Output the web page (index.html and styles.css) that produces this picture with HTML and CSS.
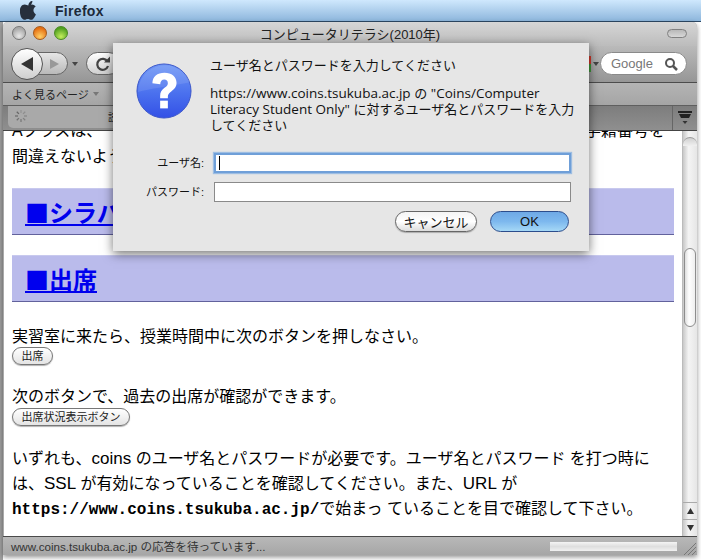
FILE: index.html
```html
<!DOCTYPE html>
<html lang="ja">
  <head>
    <meta charset="UTF-8" />
    <title>コンピュータリテラシ(2010年)</title>
    <link rel="stylesheet" href="styles.css">
  </head>
  <body>
    <div class="menubar">
      <svg class="apple" width="18" height="20" viewBox="0 0 18 20"><path d="M12.400 1c.1 1.300-.4 2.400-1.100 3.200-.8.900-1.900 1.400-2.900 1.300-.1-1.200.5-2.400 1.100-3.100C10.300 1.500 11.500 1 12.400 1zM15.900 14.400c-.5 1.100-.7 1.500-1.300 2.500-.9 1.300-2 2.900-3.500 2.900-1.300 0-1.600-.8-3.300-.8s-2.100.8-3.400.8c-1.500 0-2.500-1.400-3.400-2.700C-.4 13.200-.6 9 .8 6.900c1-1.500 2.500-2.300 4-2.300 1.500 0 2.400.8 3.600.8 1.200 0 1.900-.8 3.600-.8 1.300 0 2.700.7 3.700 2-3.300 1.800-2.700 6.400.2 7.800z" fill="#262f3c"/></svg>
      <span class="app-name">Firefox</span>
    </div>

    <div class="window">
      <div class="titlebar">
        <div class="lights">
          <span class="light light-off"></span>
          <span class="light light-min"></span>
          <span class="light light-max"></span>
        </div>
        <div class="title">コンピュータリテラシ(2010年)</div>
        <span class="pill"></span>
      </div>

      <div class="toolbar">
        <div class="nav">
          <button class="back"><svg width="16" height="16" viewBox="0 0 16 16"><path d="M14 1v14L2 8z" fill="#333"/></svg></button>
          <button class="forward"><svg width="12" height="12" viewBox="0 0 12 12"><path d="M2 1v10l9-5z" fill="#999"/></svg></button>
        </div>
        <span class="drop-arrow"></span>
        <button class="reload"><svg width="16" height="16" viewBox="0 0 16 16"><path d="M12.500 5.500A5.500 5.500 0 1 0 13 10" fill="none" stroke="#444" stroke-width="2.200"/><path d="M9 6.500h6v-6z" fill="#444"/></svg></button>
        <div class="spacer"></div>
        <span class="engine-icon"></span>
        <span class="engine-arrow"></span>
        <div class="search">
          <span>Google</span>
          <svg width="14" height="14" viewBox="0 0 14 14"><circle cx="6" cy="6" r="4" fill="none" stroke="#555" stroke-width="2"/><path d="M9 9l4 4" stroke="#555" stroke-width="2.500"/></svg>
        </div>
      </div>

      <div class="bookmarks">
        <span>よく見るページ</span>
        <span class="book-arrow"></span>
      </div>

      <div class="tabbar">
        <div class="tab">
          <svg class="spinner" width="14" height="14" viewBox="0 0 14 14"><g stroke="#666" stroke-width="1.300"><path d="M7 1v3" opacity=".3"/><path d="M11.200 2.800L9.100 4.900" opacity=".4"/><path d="M13 7h-3" opacity=".5"/><path d="M11.200 11.200L9.100 9.100" opacity=".6"/><path d="M7 13v-3" opacity=".7"/><path d="M2.800 11.200l2.100-2.100" opacity=".8"/><path d="M1 7h3" opacity=".9"/><path d="M2.800 2.800l2.100 2.100"/></g></svg>
          <span class="tab-title">読み込み中...</span>
        </div>
        <div class="tab-list">
          <svg width="18" height="16" viewBox="0 0 18 16"><path d="M2 1h14v2h-14zM3 4h12l-2 4h-8z" fill="#222"/><path d="M6.500 11h5l-2.500 3z" fill="#333"/></svg>
        </div>
      </div>

      <div class="viewport">
        <div class="page">
          <p class="clipped"><span>Aクラスは、</span><span>学籍番号を</span></p>
          <p class="line">間違えないようにして下さい。</p>
          <h2 class="heading"><a href="#">■シラバス</a></h2>
          <h2 class="heading"><a href="#">■出席</a></h2>
          <p class="line first">実習室に来たら、授業時間中に次のボタンを押しなさい。</p>
          <button class="form-btn btn-short">出席</button>
          <p class="line second">次のボタンで、過去の出席が確認ができます。</p>
          <button class="form-btn btn-long">出席状況表示ボタン</button>
          <p class="para">いずれも、<span class="lat">coins</span> のユーザ名とパスワードが必要です。ユーザ名とパスワード を打つ時には、<span class="lat">SSL</span> が有効になっていることを確認してください。また、<span class="lat">URL</span> が<br><b>https://www.coins.tsukuba.ac.jp/</b>で始まっ ていることを目で確認して下さい。</p>
        </div>
        <div class="scrollbar">
          <div class="track">
            <div class="thumb"></div>
          </div>
          <div class="arrow-btn"><svg width="9" height="8" viewBox="0 0 9 8"><path d="M4.500 1L8 7H1z" fill="#333"/></svg></div>
          <div class="arrow-btn"><svg width="9" height="8" viewBox="0 0 9 8"><path d="M4.500 7L8 1H1z" fill="#333"/></svg></div>
        </div>
      </div>

      <div class="statusbar">
        <span class="status-text">www.coins.tsukuba.ac.jp の応答を待っています...</span>
        <span class="progress"></span>
        <svg class="grip" width="12" height="12" viewBox="0 0 12 12"><path d="M0 12L12 0M4 12l8-8M8 12l4-4" stroke="#777" stroke-width="1"/></svg>
      </div>
    </div>

    <div class="dialog">
      <div class="dialog-top">
        <svg class="q-icon" width="56" height="56" viewBox="0 0 58 58">
          <defs>
            <linearGradient id="qg" x1="0" y1="0" x2="0" y2="1">
              <stop offset="0" stop-color="#6f97f5"/>
              <stop offset="0.55" stop-color="#4a70ee"/>
              <stop offset="1" stop-color="#3350e6"/>
            </linearGradient>
          </defs>
          <circle cx="29" cy="29" r="28" fill="url(#qg)" stroke="#3a55c8" stroke-width="1"/>
          <path d="M2 30C14 27 34 24 56 20A28 28 0 0 0 2 30z" fill="#fff" opacity=".1"/>
          <path d="M17 21c0-7 5-11 12.500-11C37 10 42 14 42 20.500c0 4.500-2.500 6.700-5.500 8.900-2.500 1.800-3.500 3-3.500 5.600v1.500h-8v-2.500c0-4 1.500-6 4.500-8.300 2.300-1.700 3.500-2.800 3.500-4.800 0-2.200-1.500-3.700-3.700-3.700-2.500 0-4 1.700-4.200 4.800z" fill="#fff"/>
          <rect x="25" y="39" width="8" height="8" fill="#fff"/>
        </svg>
        <div class="dialog-text">
          <p class="dialog-head">ユーザ名とパスワードを入力してください</p>
          <p><span class="dlat">https://www.coins.tsukuba.ac.jp</span> の <span class="dlat">"Coins/Computer</span><br><span class="dlat">Literacy Student Only"</span> に対するユーザ名とパスワードを入力<br>してください</p>
        </div>
      </div>
      <div class="field field-user">
        <label>ユーザ名:</label>
        <div class="input focused"><span class="caret"></span></div>
      </div>
      <div class="field">
        <label>パスワード:</label>
        <div class="input"></div>
      </div>
      <div class="dialog-buttons">
        <button class="aqua cancel">キャンセル</button>
        <button class="aqua ok">OK</button>
      </div>
    </div>
  </body>
</html>
```

FILE: styles.css
```css
* {
  box-sizing: border-box;
}

html, body {
  margin: 0;
  height: 560px;
  overflow: hidden;
}

body {
  font-family: "Liberation Sans", "Noto Sans CJK JP", sans-serif;
  background: linear-gradient(to right, #a0a0a0 3px, #fff 3px);
  color: #111;
  position: relative;
}

button {
  font-family: inherit;
  padding: 0;
}

.menubar {
  height: 22px;
  background: linear-gradient(#cfe8fd, #8db6dc);
  border-bottom: 1px solid #2e4a66;
  display: flex;
  align-items: center;
  padding-left: 20px;
  overflow: hidden;
}

.apple {
  margin-bottom: 1px;
}

.app-name {
  margin-left: 17px;
  font-size: 14px;
  font-weight: bold;
  color: #1c2a3a;
  letter-spacing: 0.3px;
}

.window {
  margin-left: 3px;
  width: 694px;
  height: 533px;
  border-radius: 5px 5px 0 0;
  background: #a9a9a9;
  box-shadow: 0 2px 5px rgba(0, 0, 0, 0.45);
  display: flex;
  flex-direction: column;
}

.titlebar {
  height: 24px;
  display: flex;
  align-items: center;
  padding: 0 10px 2px 9px;
  background: linear-gradient(#d6d6d6, #bcbcbc);
  border-radius: 5px 5px 0 0;
}

.lights {
  display: flex;
  gap: 7px;
  width: 56px;
}

.light {
  width: 14px;
  height: 14px;
  border-radius: 50%;
  border: 1px solid #777;
}

.light-off {
  background: radial-gradient(circle at 50% 75%, #e8e8e8, #a9a9a9 70%);
}

.light-min {
  background: radial-gradient(circle at 50% 80%, #ffd066, #e56e12 75%);
  border-color: #a3591b;
}

.light-max {
  background: radial-gradient(circle at 50% 80%, #c4ee5c, #4f9f1f 75%);
  border-color: #4a8a22;
}

.title {
  flex: 1;
  text-align: center;
  font-size: 13px;
  color: #222;
  padding-right: 35px;
}

.pill {
  width: 20px;
  height: 9px;
  border-radius: 5px;
  border: 1px solid #808080;
  background: linear-gradient(#b8b8b8, #d8d8d8);
}

.toolbar {
  height: 37px;
  display: flex;
  align-items: center;
  padding: 0 10px 1px 8px;
  background: linear-gradient(#bababa, #969696);
  border-bottom: 1px solid #4c4c4c;
}

.nav {
  display: flex;
  align-items: center;
}

.back {
  width: 32px;
  height: 32px;
  border-radius: 50%;
  border: 1px solid #555;
  background: linear-gradient(#fff, #cfcfcf);
  display: flex;
  align-items: center;
  justify-content: center;
  position: relative;
  z-index: 1;
}

.forward {
  width: 33px;
  height: 23px;
  margin-left: -8px;
  border-radius: 0 12px 12px 0;
  border: 1px solid #666;
  background: linear-gradient(#e6e6e6, #b9b9b9);
  display: flex;
  align-items: center;
  justify-content: center;
  padding-left: 5px;
}

.drop-arrow, .engine-arrow, .book-arrow {
  width: 0;
  height: 0;
  border-left: 3px solid transparent;
  border-right: 3px solid transparent;
  border-top: 4px solid #444;
}

.drop-arrow {
  margin: 0 8px 0 4px;
}

.reload {
  width: 34px;
  height: 23px;
  border-radius: 12px;
  border: 1px solid #666;
  background: linear-gradient(#fff, #cfcfcf);
  display: flex;
  align-items: center;
  justify-content: center;
}

.spacer {
  flex: 1;
}

.engine-icon {
  width: 4px;
  height: 16px;
  margin-right: 2px;
  background: linear-gradient(#d8392b 50%, #3f9b3a 50%);
}

.engine-arrow {
  margin-right: 1px;
}

.search {
  width: 87px;
  height: 23px;
  border-radius: 12px;
  border: 1px solid #8a8a8a;
  background: #fff;
  display: flex;
  align-items: center;
  justify-content: space-between;
  padding: 0 8px 0 10px;
  font-size: 13px;
  color: #777;
}

.bookmarks {
  height: 23px;
  display: flex;
  align-items: center;
  gap: 4px;
  padding-left: 9px;
  font-size: 11px;
  color: #222;
  background: linear-gradient(#b4b4b4, #a5a5a5);
  border-bottom: 1px solid #5f5f5f;
}

.book-arrow {
  border-top-color: #777;
}

.tabbar {
  height: 25px;
  display: flex;
  justify-content: space-between;
  background: linear-gradient(#7d7d7d, #8f8f8f);
  border-bottom: 1px solid #444;
}

.tab {
  width: 300px;
  height: 22px;
  margin-left: 5px;
  padding: 3px 0 0 6px;
  display: flex;
  align-items: flex-start;
  font-size: 10px;
  color: #222;
  background: #a9a9a9;
  border-radius: 0 0 5px 5px;
}

.tab-title {
  margin-left: 80px;
  white-space: nowrap;
}

.tab-list {
  width: 25px;
  border-left: 1px solid #666;
  display: flex;
  align-items: center;
  justify-content: center;
}

.viewport {
  flex: 1;
  min-height: 0;
  display: flex;
  margin-left: 1px;
  background: #fff;
}

.page {
  flex: 1;
  min-width: 0;
  overflow: hidden;
  padding: 0 8px;
  font-size: 16px;
  line-height: 24px;
  font-family: "Liberation Sans", "Noto Sans CJK JP", sans-serif;
  color: #000;
}

.page p {
  margin: 0;
}

.page .clipped {
  display: flex;
  justify-content: space-between;
  height: 14px;
  margin-top: -12px;
  padding-right: 9px;
}

.page .line {
  margin-top: 0;
}

.page .clipped + .line {
  margin-top: 12px;
}

.heading {
  height: 47px;
  margin: 19px 0 0;
  padding-left: 13px;
  font-family: "Noto Sans CJK JP", sans-serif;
  font-size: 24px;
  line-height: 46px;
  background: #babbeb;
  border-top: 1px solid #c8c9ee;
  border-bottom: 1px solid #62629c;
}

.heading a {
  color: #0000ee;
}

.heading + .heading {
  margin-top: 20px;
}

.page .first {
  margin-top: 23px;
}

.page .second {
  margin-top: 20px;
}

.form-btn {
  display: block;
  height: 18px;
  margin-top: -2px;
  font-size: 11px;
  line-height: 14px;
  color: #222;
  border: 1px solid #777;
  border-radius: 9px;
  background: linear-gradient(#fff, #e4e4e4);
  box-shadow: 0 1px 1px rgba(0, 0, 0, 0.3);
}

.btn-short {
  width: 41px;
}

.btn-long {
  width: 118px;
  margin-top: -1px;
}

.page .para {
  margin-top: 20px;
  width: 645px;
  line-height: 25px;
}

.para .lat {
  font-size: 17px;
  line-height: 1;
}

.para b {
  font-family: "Liberation Mono", monospace;
}

.scrollbar {
  width: 15px;
  display: flex;
  flex-direction: column;
  background: linear-gradient(to right, #c8c8c8, #f4f4f4 40%, #e6e6e6);
  border-left: 1px solid #bbb;
}

.track {
  flex: 1;
  padding-top: 6px;
}

.track::before {
  content: "";
  display: block;
  height: 8px;
  border-radius: 7px 7px 0 0;
  border-top: 1px solid #9a9a9a;
  background: linear-gradient(#d0d0d0, #f0f0f0);
}

.thumb {
  height: 79px;
  margin: 102px 1px 0;
  border-radius: 7px;
  border: 1px solid #8d8d8d;
  background: linear-gradient(to right, #ddd, #fff 40%, #eee);
}

.arrow-btn {
  height: 17px;
  border-top: 1px solid #aaa;
  display: flex;
  align-items: center;
  justify-content: center;
}

.statusbar {
  height: 19px;
  display: flex;
  align-items: center;
  padding-left: 8px;
  font-size: 11.600px;
  color: #333;
  background: linear-gradient(#b8b8b8, #a6a6a6);
  border-top: 1px solid #4a4a4a;
}

.status-text {
  flex: 1;
}

.progress {
  width: 127px;
  height: 9px;
  margin-right: 7px;
  background: linear-gradient(#f4f4f4, #dedede 50%, #f0f0f0);
}

.grip {
  align-self: flex-end;
  margin-right: 1px;
}

.dialog {
  position: absolute;
  left: 113px;
  top: 43px;
  width: 476px;
  height: 208px;
  background: #e6e6e6;
  box-shadow: 0 3px 10px rgba(0, 0, 0, 0.55);
  padding: 15px 18px 0 23px;
  font-size: 13px;
  color: #111;
}

.dialog-top {
  display: flex;
  gap: 18px;
  height: 95px;
}

.q-icon {
  margin-top: 5px;
  flex: none;
}

.dialog-text {
  width: 368px;
  line-height: 16px;
  white-space: nowrap;
}

.dialog-text p {
  margin: 0;
}

.dialog-text .dialog-head {
  margin-bottom: 12px;
}

.dlat {
  font-family: "Open Sans", sans-serif;
  font-size: 13.500px;
  line-height: 1;
}

.field {
  display: flex;
  align-items: center;
  height: 20px;
  margin-top: 9px;
}

.field-user {
  margin-top: 0;
}

.field label {
  width: 68px;
  text-align: right;
  font-size: 11px;
  margin-right: 10px;
  padding-bottom: 3px;
}

.input {
  width: 357px;
  height: 20px;
  background: #fff;
  border: 1px solid #8a8a8a;
  display: flex;
  align-items: center;
  padding-left: 4px;
}

.input.focused {
  border: 2px solid #6f9fd8;
  box-shadow: 0 0 1px 1px #9dbde2;
  padding-left: 3px;
}

.caret {
  width: 1px;
  height: 14px;
  background: #000;
}

.dialog-buttons {
  display: flex;
  justify-content: flex-end;
  gap: 13px;
  margin-top: 9px;
  padding-right: 2px;
}

.aqua {
  height: 21px;
  border-radius: 11px;
  font-size: 13px;
  color: #111;
}

.cancel {
  width: 82px;
  border: 1px solid #666;
  background: linear-gradient(#f4f4f4, #fff 50%, #dcdcdc);
  box-shadow: 0 1px 1px rgba(0, 0, 0, 0.25);
}

.ok {
  width: 79px;
  border: 1px solid #2c4d8c;
  background: linear-gradient(#6fa9e6, #7db8ee 50%, #a5d8f6);
}
```
